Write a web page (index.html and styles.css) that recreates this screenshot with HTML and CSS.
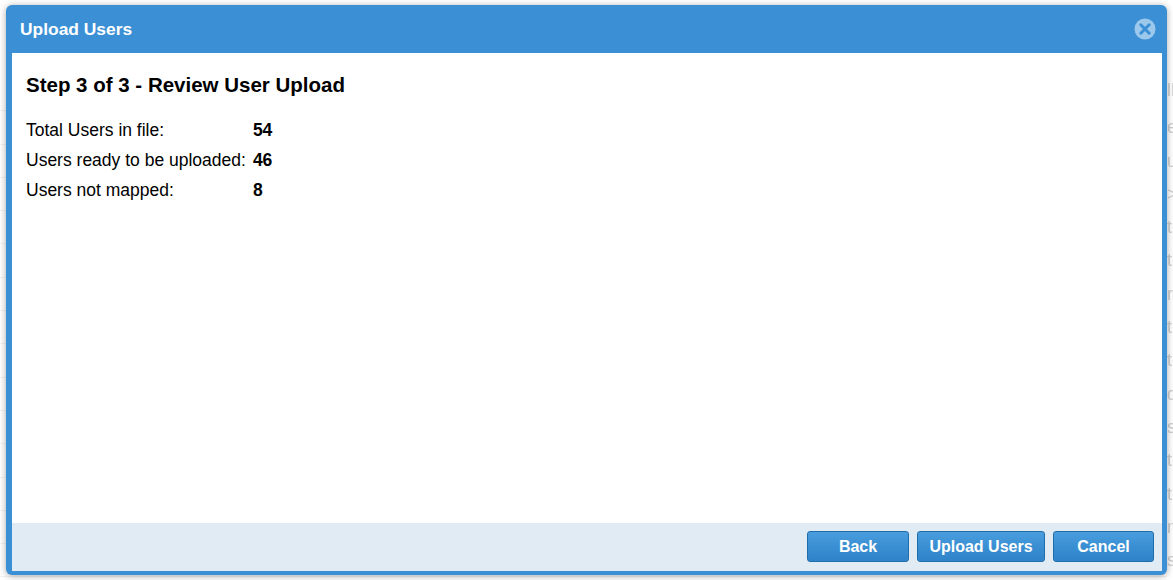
FILE: index.html
```html
<!DOCTYPE html>
<html lang="en">
  <head>
    <meta charset="UTF-8" />
    <meta name="viewport" content="width=device-width, initial-scale=1.0" />
    <title>Upload Users</title>
    <link rel="stylesheet" href="styles.css">
  </head>
  <body>
    <!-- Page behind the dialog, faded out -->
    <div class="backdrop">
      <div class="bg-row bg-head">ll</div>
      <div class="bg-row">e</div>
      <div class="bg-row">u</div>
      <div class="bg-row">&gt;</div>
      <div class="bg-row">t-</div>
      <div class="bg-row">t-</div>
      <div class="bg-row">r</div>
      <div class="bg-row">t-</div>
      <div class="bg-row">t-</div>
      <div class="bg-row">d</div>
      <div class="bg-row">s</div>
      <div class="bg-row">t-</div>
      <div class="bg-row">t-</div>
      <div class="bg-row">m</div>
      <div class="bg-row">s</div>
    </div>

    <div class="dialog">
      <div class="dialog-header">
        <span class="dialog-title">Upload Users</span>
        <svg class="dialog-close" width="22" height="22" viewBox="0 0 22 22">
          <circle cx="11" cy="11" r="10.5" fill="#9cc8eb" />
          <path d="M6.8 6.8 L15.2 15.2 M15.2 6.8 L6.8 15.2" stroke="#3b90d5" stroke-width="3" stroke-linecap="round" />
        </svg>
      </div>

      <div class="dialog-body">
        <h2 class="step-title">Step 3 of 3 - Review User Upload</h2>
        <div class="summary">
          <span>Total Users in file:</span><b>54</b>
          <span>Users ready to be uploaded:</span><b>46</b>
          <span>Users not mapped:</span><b>8</b>
        </div>
      </div>

      <div class="dialog-footer">
        <button class="btn btn-back">Back</button>
        <button class="btn btn-upload">Upload Users</button>
        <button class="btn btn-cancel">Cancel</button>
      </div>
    </div>
  </body>
</html>
```

FILE: styles.css
```css
body {
  margin: 0;
  width: 1173px;
  height: 580px;
  overflow: hidden;
  background-color: #fff;
  font-family: "Liberation Sans", Arial, sans-serif;
}

/* Page behind the dialog */
.backdrop {
  padding-top: 78px;
  padding-left: 1167px;
  color: #cfcfcf;
  font-size: 18px;
  filter: blur(0.5px);
}

.bg-row {
  width: 100px;
  height: 33.3px;
  margin-left: -1167px;
  padding-left: 1167px;
  line-height: 33px;
  border-bottom: 1px solid #f3f3f3;
  box-sizing: border-box;
  white-space: nowrap;
}

.bg-head {
  line-height: 25px;
}

/* Dialog */
.dialog {
  position: absolute;
  top: 5px;
  left: 6px;
  width: 1161px;
  height: 570px;
  box-sizing: border-box;
  display: flex;
  flex-direction: column;
  background-color: #3b90d5;
  border-radius: 6px;
  padding: 0 5px 4px 6px;
  box-shadow: 0 1px 7px rgba(0, 0, 0, 0.35);
}

.dialog-header {
  height: 48px;
  flex: none;
  display: flex;
  align-items: center;
  justify-content: space-between;
  color: #fff;
}

.dialog-title {
  font-size: 17.4px;
  font-weight: bold;
  margin-left: 8px;
}

.dialog-close {
  margin-right: 6px;
}

.dialog-body {
  flex: 1;
  background-color: #fff;
  padding: 20px 14px 0;
}

.step-title {
  margin: 0 0 18px;
  font-size: 20.5px;
  line-height: 24px;
  font-weight: bold;
  color: #000;
}

.summary {
  display: grid;
  grid-template-columns: max-content max-content;
  column-gap: 7px;
  grid-auto-rows: 30px;
  align-items: center;
  font-size: 17.5px;
  color: #000;
}

/* Footer buttons */
.dialog-footer {
  height: 48px;
  flex: none;
  display: flex;
  align-items: flex-start;
  justify-content: flex-end;
  gap: 8px;
  padding: 8px 8px 0 0;
  box-sizing: border-box;
  background-color: #e0ebf4;
}

.btn {
  height: 31px;
  padding: 0;
  border: 1px solid #1f6cab;
  border-radius: 3px;
  background: linear-gradient(to bottom, #4a9ede, #3a8fd3 50%, #2f83c9);
  color: #fff;
  font-family: inherit;
  font-size: 16px;
  font-weight: bold;
}

.btn-back {
  width: 102px;
}

.btn-upload {
  width: 128px;
}

.btn-cancel {
  width: 101px;
}
```
